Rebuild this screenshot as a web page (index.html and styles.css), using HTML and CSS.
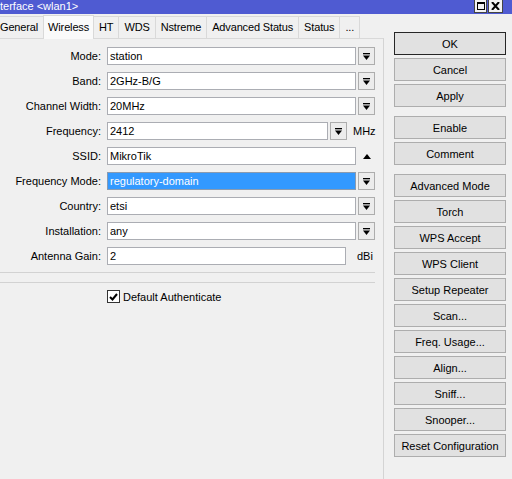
FILE: index.html
```html
<!DOCTYPE html>
<html lang="en">
<head>
    <meta charset="UTF-8">
    <title>Interface &lt;wlan1&gt;</title>
    <link rel="stylesheet" href="styles.css">
</head>
<body>
    <div class="window">
        <!-- Title bar -->
        <div class="titlebar">
            <span class="title">terface &lt;wlan1&gt;</span>
            <span class="caption-btn">
                <svg width="8" height="8" viewBox="0 0 8 8"><rect x="0.5" y="0.5" width="7" height="7" fill="none" stroke="#000"/><rect x="0" y="0" width="8" height="2" fill="#000"/></svg>
            </span>
            <span class="caption-btn">
                <svg width="9" height="8" viewBox="0 0 9 8"><path d="M1 0 L8 8 M8 0 L1 8" stroke="#000" stroke-width="2"/></svg>
            </span>
        </div>

        <div class="content">
            <div class="left">
                <!-- Tabs -->
                <div class="tabs">
                    <div class="tab first">General</div>
                    <div class="tab active">Wireless</div>
                    <div class="tab">HT</div>
                    <div class="tab">WDS</div>
                    <div class="tab">Nstreme</div>
                    <div class="tab">Advanced Status</div>
                    <div class="tab">Status</div>
                    <div class="tab">...</div>
                </div>

                <div class="panel">
                    <div class="form">
                        <div class="row">
                            <label>Mode:</label>
                            <div class="field">station</div>
                            <span class="drop"><svg width="7" height="7" viewBox="0 0 7 7"><rect width="7" height="1.3"/><polygon points="0,2.6 7,2.6 3.5,7"/></svg></span>
                        </div>
                        <div class="row">
                            <label>Band:</label>
                            <div class="field">2GHz-B/G</div>
                            <span class="drop"><svg width="7" height="7" viewBox="0 0 7 7"><rect width="7" height="1.3"/><polygon points="0,2.6 7,2.6 3.5,7"/></svg></span>
                        </div>
                        <div class="row">
                            <label>Channel Width:</label>
                            <div class="field">20MHz</div>
                            <span class="drop"><svg width="7" height="7" viewBox="0 0 7 7"><rect width="7" height="1.3"/><polygon points="0,2.6 7,2.6 3.5,7"/></svg></span>
                        </div>
                        <div class="row">
                            <label>Frequency:</label>
                            <div class="field short">2412</div>
                            <span class="drop"><svg width="7" height="7" viewBox="0 0 7 7"><rect width="7" height="1.3"/><polygon points="0,2.6 7,2.6 3.5,7"/></svg></span>
                            <span class="unit">MHz</span>
                        </div>
                        <div class="row">
                            <label>SSID:</label>
                            <div class="field">MikroTik</div>
                            <span class="toggle"><svg width="8" height="5" viewBox="0 0 8 5"><polygon points="0,5 8,5 4,0"/></svg></span>
                        </div>
                        <div class="row">
                            <label>Frequency Mode:</label>
                            <div class="field selected">regulatory-domain</div>
                            <span class="drop"><svg width="7" height="7" viewBox="0 0 7 7"><rect width="7" height="1.3"/><polygon points="0,2.6 7,2.6 3.5,7"/></svg></span>
                        </div>
                        <div class="row">
                            <label>Country:</label>
                            <div class="field">etsi</div>
                            <span class="drop"><svg width="7" height="7" viewBox="0 0 7 7"><rect width="7" height="1.3"/><polygon points="0,2.6 7,2.6 3.5,7"/></svg></span>
                        </div>
                        <div class="row">
                            <label>Installation:</label>
                            <div class="field">any</div>
                            <span class="drop"><svg width="7" height="7" viewBox="0 0 7 7"><rect width="7" height="1.3"/><polygon points="0,2.6 7,2.6 3.5,7"/></svg></span>
                        </div>
                        <div class="row">
                            <label>Antenna Gain:</label>
                            <div class="field gain">2</div>
                            <span class="unit dbi">dBi</span>
                        </div>
                    </div>

                    <div class="divider"></div>

                    <div class="check">
                        <span class="box"><svg width="9" height="8" viewBox="0 0 9 8"><path d="M1 4 L3.5 6.5 L8 1" fill="none" stroke="#000" stroke-width="2"/></svg></span>
                        <span>Default Authenticate</span>
                    </div>
                </div>
            </div>

            <!-- Action buttons -->
            <div class="actions">
                <button class="default">OK</button>
                <button>Cancel</button>
                <button>Apply</button>

                <button class="group-start">Enable</button>
                <button>Comment</button>

                <button class="group-start">Advanced Mode</button>
                <button>Torch</button>
                <button>WPS Accept</button>
                <button>WPS Client</button>
                <button>Setup Repeater</button>
                <button>Scan...</button>
                <button>Freq. Usage...</button>
                <button>Align...</button>
                <button>Sniff...</button>
                <button>Snooper...</button>
                <button>Reset Configuration</button>
            </div>
        </div>
    </div>
</body>
</html>
```

FILE: styles.css
```css
body {
    margin: 0;
    font-family: "Liberation Sans", Arial, sans-serif;
    font-size: 11px;
    color: #000;
    background: #f0f0f0;
}

.window {
    width: 512px;
    height: 479px;
    overflow: hidden;
}

/* Title bar */
.titlebar {
    height: 14px;
    background: #4f5bd2;
    color: #fff;
    display: flex;
    align-items: flex-start;
}

.title {
    flex: 1;
    line-height: 13px;
    font-size: 11px;
}

.caption-btn {
    width: 11px;
    height: 12px;
    background: #f2f2f2;
    border: 1px solid #444;
    border-top: none;
    display: flex;
    align-items: center;
    justify-content: center;
    margin-right: 1px;
}

.caption-btn:last-child {
    width: 13px;
    margin-right: 9px;
}

.content {
    display: flex;
}

.left {
    width: 384px;
}

/* Tabs */
.tabs {
    display: flex;
    align-items: flex-end;
    height: 24px;
    letter-spacing: -0.15px;
}

.tab {
    height: 21px;
    line-height: 21px;
    padding: 0 5px;
    border: 1px solid #d9d9d9;
    border-bottom: none;
    background: #f0f0f0;
    margin-right: -1px;
    white-space: nowrap;
}

.tab.first {
    padding-left: 0;
    border-left: none;
}

.tab.active {
    height: 23px;
    line-height: 22px;
    background: #fafafa;
    padding: 0 4px;
    margin-bottom: -1px;
    position: relative;
    z-index: 1;
}

.panel {
    border-top: 1px solid #d9d9d9;
    border-right: 1px solid #d4d4d4;
    height: 440px;
}

/* Form rows */
.form {
    padding-top: 8px;
}

.row {
    display: flex;
    align-items: center;
    height: 18px;
    margin-bottom: 7px;
}

.row label {
    flex: none;
    width: 101px;
    margin-right: 6px;
    text-align: right;
}

.field {
    flex: none;
    box-sizing: border-box;
    width: 249px;
    height: 18px;
    line-height: 16px;
    padding: 0 2px;
    border: 1px solid #abadb3;
    background: #fff;
    white-space: nowrap;
}

.field.short {
    width: 221px;
}

.field.gain {
    width: 239px;
}

.field.selected {
    background: #3399ff;
    color: #fff;
    border-color: #8a9bb0;
}

.drop {
    flex: none;
    box-sizing: border-box;
    width: 17px;
    height: 18px;
    margin-left: 2px;
    border: 1px solid #adadad;
    background: #ececec;
    display: flex;
    align-items: center;
    justify-content: center;
}

.toggle {
    display: flex;
    margin-left: 7px;
}

.unit {
    margin-left: 6px;
}

.unit.dbi {
    margin-left: 11px;
}

.divider {
    margin: 3px 8px 0 0;
    height: 9px;
    border-top: 1px solid #d2d2d2;
    border-bottom: 1px solid #d2d2d2;
}

.check {
    display: flex;
    align-items: center;
    margin: 7px 0 0 107px;
}

.check .box {
    box-sizing: border-box;
    width: 13px;
    height: 13px;
    border: 1px solid #333;
    background: #fff;
    display: flex;
    align-items: center;
    justify-content: center;
    margin-right: 3px;
}

/* Right column */
.actions {
    width: 112px;
    margin-left: 10px;
    padding-top: 18px;
    display: flex;
    flex-direction: column;
    gap: 3px;
}

.actions button {
    height: 23px;
    padding: 0;
    font-family: inherit;
    font-size: 11px;
    color: #000;
    background: #e1e1e1;
    border: 1px solid #adadad;
    white-space: nowrap;
}

.actions button.default {
    border-color: #262626;
}

.actions button.group-start {
    margin-top: 6px;
}
```
